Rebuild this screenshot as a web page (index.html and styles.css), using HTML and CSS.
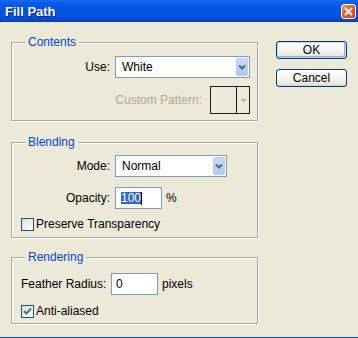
FILE: index.html
```html
<!DOCTYPE html>
<html>
<head>
<meta charset="utf-8">
<link rel="stylesheet" href="styles.css">
</head>
<body>
<div class="window">
  <div class="titlebar">
    <span class="title">Fill Path</span>
    <span class="close"><svg width="9" height="9" viewBox="0 0 9 9"><path d="M1 1 L8 8 M8 1 L1 8" stroke="#fff" stroke-width="2" fill="none"/></svg></span>
  </div>
  <div class="body">
    <div class="groups">
      <section class="group contents">
        <div class="group-title">Contents</div>
        <div class="field-grid">
          <span class="lbl">Use:</span>
          <div class="combo combo-use"><span>White</span><span class="drop"><svg width="8" height="5" viewBox="0 0 8 5"><path d="M1 0.5 L4 3.5 L7 0.5" stroke="#46705F" stroke-width="2" fill="none"/></svg></span></div>
        </div>
        <div class="pattern-row">
          <span class="disabled">Custom Pattern:</span>
          <div class="pattern"><span class="swatch"></span><span class="pdrop"><svg width="5" height="3" viewBox="0 0 5 3"><path d="M0 0 H5 L2.5 3 Z" fill="#ACA899"/></svg></span></div>
        </div>
      </section>
      <section class="group blending">
        <div class="group-title">Blending</div>
        <div class="field-grid rows">
          <span class="lbl">Mode:</span>
          <div class="combo combo-mode"><span>Normal</span><span class="drop"><svg width="8" height="5" viewBox="0 0 8 5"><path d="M1 0.5 L4 3.5 L7 0.5" stroke="#46705F" stroke-width="2" fill="none"/></svg></span></div>
          <span class="lbl">Opacity:</span>
          <div class="inline"><div class="textbox opacity"><span class="sel">100</span><span class="caret"></span></div><span class="unit">%</span></div>
        </div>
        <div class="check-row"><span class="checkbox"></span><span class="ck-label">Preserve Transparency</span></div>
      </section>
      <section class="group rendering">
        <div class="group-title">Rendering</div>
        <div class="feather-row"><span class="flbl">Feather Radius:</span><div class="textbox feather">0</div><span class="unit">pixels</span></div>
        <div class="check-row anti"><span class="checkbox checked"><svg width="11" height="11" viewBox="0 0 11 11"><path d="M2 5 L4.5 7.5 L9 2.5" stroke="#3F7D68" stroke-width="2" fill="none"/></svg></span><span class="ck-label">Anti-aliased</span></div>
      </section>
    </div>
    <div class="buttons">
      <button class="btn default">OK</button>
      <button class="btn">Cancel</button>
    </div>
  </div>
</div>
</body>
</html>
```
FILE: styles.css
```css
* { box-sizing: border-box; }
html, body { margin: 0; padding: 0; }
body {
  width: 358px;
  height: 338px;
  overflow: hidden;
  background: #ECE9D8;
  font-family: "Liberation Sans", Arial, sans-serif;
  font-size: 12px;
  color: #000;
}
.window {
  height: 338px;
  display: flex;
  flex-direction: column;
  border-bottom: 1px solid #0A4AD0;
}
.titlebar {
  height: 22px;
  flex: none;
  display: flex;
  align-items: center;
  justify-content: space-between;
  padding: 1px 2px 0 5px;
  background: linear-gradient(#1A6CF0 0, #0A5CEB 3px, #0055E5 8px, #0052DE 16px, #0047C8 20px, #003DB0 22px);
}
.title {
  color: #fff;
  font-weight: bold;
  font-size: 13px;
  line-height: 15px;
  text-shadow: 1px 1px 0 #0A1883;
}
.close {
  width: 15px;
  height: 15px;
  border: 1px solid #fff;
  border-radius: 3px;
  background: linear-gradient(135deg, #F39A72 0%, #E5602F 40%, #D2461C 100%);
  display: flex;
  align-items: center;
  justify-content: center;
}
.body {
  flex: 1;
  display: flex;
  padding-left: 11px;
}
.groups {
  width: 247px;
  display: flex;
  flex-direction: column;
}
.group {
  border: 1px solid #ACA899;
  box-shadow: inset 1px 1px 0 #fff, 1px 1px 0 #fff;
  display: flex;
  flex-direction: column;
}
.group-title {
  align-self: flex-start;
  margin: -8px 0 0 13px;
  padding: 0 3px;
  background: #ECE9D8;
  color: #0046D5;
  line-height: 14px;
}
.contents { margin-top: 20px; padding-right: 7px; padding-bottom: 6px; }
.blending { margin-top: 21px; padding-bottom: 6px; }
.rendering { margin-top: 19px; padding-bottom: 5px; }

.field-grid {
  display: grid;
  grid-template-columns: 98px auto;
  column-gap: 5px;
  row-gap: 10px;
  align-items: center;
  margin-top: 7px;
}
.blending .field-grid { margin-top: 6px; justify-items: start; }
.lbl { text-align: right; justify-self: end; }

.combo {
  height: 22px;
  border: 1px solid #7F9DB9;
  background: #fff;
  display: flex;
  align-items: center;
  justify-content: space-between;
  padding-left: 6px;
}
.combo-use { width: 135px; }
.combo-mode { width: 112px; }
.drop {
  width: 12px;
  height: 18px;
  margin-right: 1px;
  border-radius: 2px;
  background: linear-gradient(#CAD9FC, #B4C8F6);
  border: 1px solid #BACBF3;
  display: flex;
  align-items: center;
  justify-content: center;
}

.pattern-row {
  margin-top: 8px;
  display: flex;
  justify-content: flex-end;
  align-items: center;
  gap: 8px;
}
.disabled { color: #ACA899; }
.pattern {
  width: 40px;
  height: 28px;
  border: 1px solid #1E1E1E;
  display: flex;
}
.swatch { width: 26px; border-right: 1px solid #1E1E1E; }
.pdrop { flex: 1; display: flex; align-items: center; justify-content: center; }

.inline { display: flex; align-items: center; gap: 4px; }
.textbox {
  width: 47px;
  height: 22px;
  border: 1px solid #7F9DB9;
  background: #fff;
  display: flex;
  align-items: center;
}
.opacity { padding-left: 5px; }
.sel {
  background: #316AC5;
  color: #fff;
  line-height: 12px;
  height: 12px;
}
.caret { width: 1px; height: 13px; background: #000; }
.feather { padding-left: 4px; }

.check-row {
  display: flex;
  align-items: center;
  gap: 2px;
  margin-top: 9px;
  padding-left: 9px;
  height: 13px;
}
.anti { margin-top: 10px; }
.checkbox {
  width: 13px;
  height: 13px;
  border: 1px solid #1C5180;
  background: linear-gradient(135deg, #DCDCD7 0%, #F5F5F2 70%, #fff 100%);
  display: flex;
  align-items: center;
  justify-content: center;
}
.ck-label { line-height: 13px; }

.feather-row {
  display: flex;
  align-items: center;
  margin-top: 9px;
  padding-left: 9px;
}
.flbl { width: 90px; }
.feather-row .unit { margin-left: 4px; }

.buttons {
  margin-left: 18px;
  padding-top: 19px;
  display: flex;
  flex-direction: column;
  gap: 10px;
}
.btn {
  width: 71px;
  height: 18px;
  padding: 0;
  border: 1px solid #003C74;
  border-radius: 3px;
  background: linear-gradient(#FFFFFF 0%, #F7F7F4 40%, #ECEBE6 80%, #D8D4C8 100%);
  font-family: "Liberation Sans", Arial, sans-serif;
  font-size: 12px;
  color: #000;
  line-height: 16px;
}
.default {
  box-shadow: inset 0 0 0 1px #C6D8F7, inset -1px -1px 0 1px #8EAEE6;
}
```
